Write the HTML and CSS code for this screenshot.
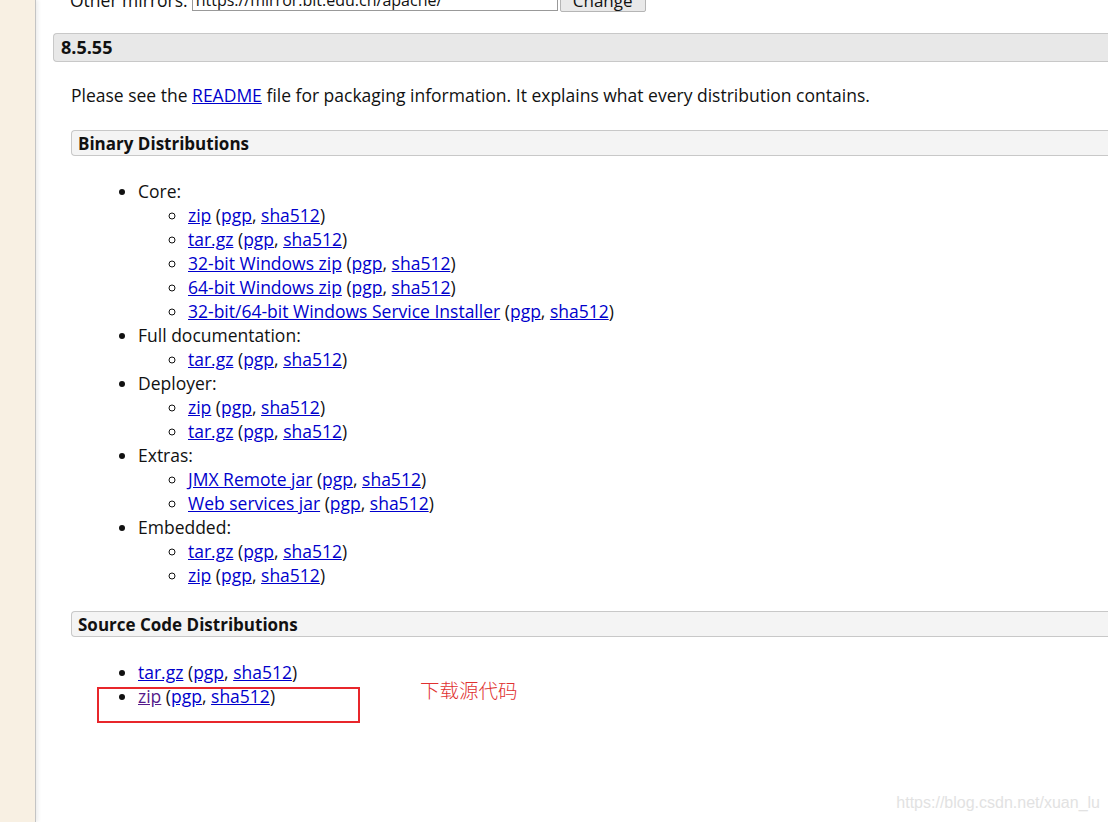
FILE: index.html
```html
<!DOCTYPE html>
<html lang="en">
<head>
<meta charset="utf-8">
<title>Tomcat 8 Downloads</title>
<link rel="stylesheet" href="styles.css">
</head>
<body>
<div class="page">
  <aside class="sidebar"></aside>
  <main class="main">
    <form class="mirrors">
      <span class="mirrors-label">Other mirrors:</span>
      <input class="mirrors-input" type="text" value="https://mirror.bit.edu.cn/apache/">
      <button class="mirrors-btn" type="button">Change</button>
    </form>

    <h3 class="version">8.5.55</h3>

    <div class="section">
      <p class="intro">Please see the <a href="#">README</a> file for packaging information. It explains what every distribution contains.</p>

      <h4 class="subhead">Binary Distributions</h4>
      <ul class="list">
        <li>Core:
          <ul class="sublist">
            <li><a href="#">zip</a> (<a href="#">pgp</a>, <a href="#">sha512</a>)</li>
            <li><a href="#">tar.gz</a> (<a href="#">pgp</a>, <a href="#">sha512</a>)</li>
            <li><a href="#">32-bit Windows zip</a> (<a href="#">pgp</a>, <a href="#">sha512</a>)</li>
            <li><a href="#">64-bit Windows zip</a> (<a href="#">pgp</a>, <a href="#">sha512</a>)</li>
            <li><a href="#">32-bit/64-bit Windows Service Installer</a> (<a href="#">pgp</a>, <a href="#">sha512</a>)</li>
          </ul>
        </li>
        <li>Full documentation:
          <ul class="sublist">
            <li><a href="#">tar.gz</a> (<a href="#">pgp</a>, <a href="#">sha512</a>)</li>
          </ul>
        </li>
        <li>Deployer:
          <ul class="sublist">
            <li><a href="#">zip</a> (<a href="#">pgp</a>, <a href="#">sha512</a>)</li>
            <li><a href="#">tar.gz</a> (<a href="#">pgp</a>, <a href="#">sha512</a>)</li>
          </ul>
        </li>
        <li>Extras:
          <ul class="sublist">
            <li><a href="#">JMX Remote jar</a> (<a href="#">pgp</a>, <a href="#">sha512</a>)</li>
            <li><a href="#">Web services jar</a> (<a href="#">pgp</a>, <a href="#">sha512</a>)</li>
          </ul>
        </li>
        <li>Embedded:
          <ul class="sublist">
            <li><a href="#">tar.gz</a> (<a href="#">pgp</a>, <a href="#">sha512</a>)</li>
            <li><a href="#">zip</a> (<a href="#">pgp</a>, <a href="#">sha512</a>)</li>
          </ul>
        </li>
      </ul>

      <h4 class="subhead">Source Code Distributions</h4>
      <ul class="list">
        <li><a href="#">tar.gz</a> (<a href="#">pgp</a>, <a href="#">sha512</a>)</li>
        <li class="marked"><a class="visited" href="#">zip</a> (<a href="#">pgp</a>, <a href="#">sha512</a>)
          <span class="redbox"></span>
          <span class="note">下载源代码</span>
        </li>
      </ul>
    </div>
  </main>
</div>
<div class="watermark">https://blog.csdn.net/xuan_lu</div>
</body>
</html>
```
FILE: styles.css
```css
html, body {
  margin: 0;
  padding: 0;
  background: #ffffff;
  overflow: hidden;
}
body {
  font-family: "Open Sans", "Noto Sans", sans-serif;
  font-size: 17.5px;
  line-height: 24px;
  color: #111;
  width: 1108px;
  height: 822px;
  position: relative;
}
.page {
  display: flex;
  min-height: 822px;
}
.sidebar {
  width: 35px;
  flex: none;
  background: #f8f0e3;
  border-right: 1px solid #c4c4c4;
  box-shadow: 2px 0 4px rgba(0, 0, 0, 0.08);
  position: relative;
  z-index: 1;
}
.main {
  flex: 1;
  padding-left: 17px;
  min-width: 0;
}
.mirrors {
  display: flex;
  align-items: flex-end;
  margin: -16px 0 0 17px;
  height: 27px;
}
.mirrors-label {
  margin-right: 4px;
  line-height: 22px;
}
.mirrors-input {
  width: 358px;
  height: 20px;
  border: 1px solid #999;
  padding: 0 3px;
  font: 16px "Open Sans", sans-serif;
  color: #111;
  margin: 0 2px 0 0;
  box-sizing: content-box;
}
.mirrors-btn {
  width: 86px;
  height: 24px;
  margin-bottom: -1px;
  border: 1px solid #b5b5b5;
  background: #e9e9e9;
  font: 17px "Open Sans", sans-serif;
  color: #111;
  border-radius: 2px;
  padding: 0;
}
.version {
  margin: 22px 0 0 0;
  height: 27px;
  line-height: 27px;
  padding: 0 7px;
  background: #e8e8e8;
  border: 1px solid #c8c8c8;
  border-right: none;
  border-radius: 4px 0 0 4px;
  font-size: 18px;
  font-weight: bold;
  color: #111;
}
.section {
  margin-left: 18px;
}
.intro {
  margin: 21px 0 23px 0;
}
a {
  color: #0000cc;
  text-decoration: underline;
}
a.visited {
  color: #551a8b;
}
.subhead {
  margin: 0;
  height: 24px;
  line-height: 25px;
  padding: 0 6px;
  background: #f4f4f4;
  border: 1px solid #c8c8c8;
  border-right: none;
  border-radius: 4px 0 0 4px;
  font-size: 17px;
  font-weight: bold;
}
.list {
  margin: 23px 0 24px 0;
  padding-left: 67px;
  list-style: disc;
}
.sublist {
  margin: 0;
  padding-left: 50px;
  list-style: circle;
}
.marked {
  position: relative;
}
.redbox {
  position: absolute;
  left: -41px;
  top: 3px;
  width: 259px;
  height: 32px;
  border: 2px solid #e8262b;
}
.note {
  position: absolute;
  left: 282px;
  top: -6px;
  font-family: "Noto Sans CJK SC", sans-serif;
  font-size: 19.5px;
  color: #e03030;
  font-weight: 300;
}
.watermark {
  position: absolute;
  right: 8px;
  bottom: 7px;
  font-family: "Liberation Sans", Arial, sans-serif;
  font-size: 16px;
  color: #e2e2e2;
}
```
